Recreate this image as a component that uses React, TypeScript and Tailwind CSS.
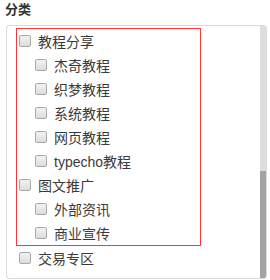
import React from 'react';

interface Item {
  label: string;
  children?: string[];
}

const grouped: Item[] = [
  { label: '教程分享', children: ['杰奇教程', '织梦教程', '系统教程', '网页教程', 'typecho教程'] },
  { label: '图文推广', children: ['外部资讯', '商业宣传'] },
];

const Box = () => (
  <span className="w-[12px] h-[12px] shrink-0 rounded-[2px] border border-[#a9a9a9] bg-gradient-to-b from-[#f2f2f2] to-[#dcdcdc]" />
);

const Row: React.FC<{ label: string; child?: boolean }> = ({ label, child }) => (
  <label className={`h-[24px] flex items-center gap-[7px] ${child ? 'pl-[18px]' : 'pl-[2px]'}`}>
    <Box />
    <span className="text-[14px] leading-none text-[#3a3a3a] pt-[2px]">{label}</span>
  </label>
);

const App: React.FC = () => {
  return (
    <div
      className="w-[270px] h-[280px] bg-white overflow-hidden"
      style={{ fontFamily: '"Liberation Sans", "Noto Sans CJK SC", sans-serif' }}
    >
      <div className="h-[25px] pl-[5px] pt-[2px] text-[13px] font-bold text-[#333] leading-[16px]">分类</div>

      <div className="ml-[6px] w-[261px] h-[254px] border border-[#d9d9d9] rounded-[3px] flex overflow-hidden">
        <div className="flex-1 pt-[2px]">
          <div className="ml-[9px] w-[185px] border border-[#ef3d3d]">
            {grouped.map((g) => (
              <div key={g.label}>
                <Row label={g.label} />
                {g.children?.map((c) => <Row key={c} label={c} child />)}
              </div>
            ))}
          </div>
          <div className="ml-[10px]">
            <Row label="交易专区" />
          </div>
        </div>

        <div className="w-[6px] flex flex-col bg-[#dddddd]">
          <div className="h-[145px]" />
          <div className="flex-1 bg-[#a3a3a3]" />
        </div>
      </div>
    </div>
  );
};

export default App;
